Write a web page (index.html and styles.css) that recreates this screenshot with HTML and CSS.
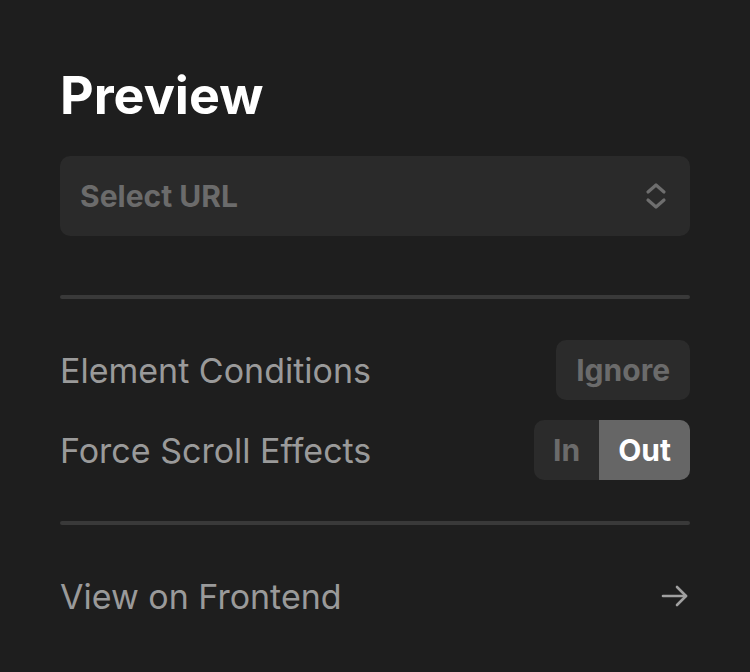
FILE: index.html
```html
<!DOCTYPE html>
<html>
<head>
<meta charset="utf-8">
<link rel="stylesheet" href="styles.css">
</head>
<body>
<div class="panel">
  <h1 class="title">Preview</h1>
  <div class="select">
    <span class="select-text">Select URL</span>
    <svg class="chevrons" width="24" height="30" viewBox="0 0 24 30" fill="none" stroke="#6e6e6e" stroke-width="3.2" stroke-linecap="round" stroke-linejoin="round">
      <path d="M4 11 L12 4 L20 11"/>
      <path d="M4 19 L12 26 L20 19"/>
    </svg>
  </div>
  <div class="divider"></div>
  <div class="rows">
    <div class="row">
      <span class="label">Element Conditions</span>
      <span class="btn">Ignore</span>
    </div>
    <div class="row">
      <span class="label">Force Scroll Effects</span>
      <div class="toggle">
        <span class="seg">In</span>
        <span class="seg active">Out</span>
      </div>
    </div>
  </div>
  <div class="divider"></div>
  <div class="link-row">
    <span class="label">View on Frontend</span>
    <svg class="arrow" width="30" height="24" viewBox="0 0 30 24" fill="none" stroke="#a0a0a0" stroke-width="2.6" stroke-linecap="round" stroke-linejoin="round">
      <path d="M3 12 H26"/>
      <path d="M17 3 L26 12 L17 21"/>
    </svg>
  </div>
</div>
</body>
</html>
```
FILE: styles.css
```css
html, body {
  margin: 0;
  padding: 0;
  background: #1e1e1e;
}
body {
  font-family: Inter, "Noto Sans", sans-serif;
  width: 750px;
  height: 672px;
  overflow: hidden;
}
.panel {
  padding: 60px 60px 0 60px;
  display: flex;
  flex-direction: column;
}
.title {
  margin: 0;
  font-size: 52px;
  font-weight: 700;
  color: #ffffff;
  line-height: 72px;
}
.select {
  margin-top: 24px;
  height: 80px;
  border-radius: 10px;
  background: #2a2a2a;
  display: flex;
  align-items: center;
  justify-content: space-between;
  padding: 0 22px 0 20px;
}
.select-text {
  font-size: 30px;
  font-weight: 700;
  color: #6b6b6b;
}
.chevrons {
  display: block;
}
.divider {
  height: 4px;
  border-radius: 2px;
  background: #393939;
}
.select + .divider {
  margin-top: 59px;
}
.rows {
  display: flex;
  flex-direction: column;
  gap: 20px;
  margin-top: 41px;
  margin-bottom: 41px;
}
.row {
  display: flex;
  align-items: center;
  justify-content: space-between;
  height: 60px;
}
.label {
  font-size: 34px;
  color: #9a9a9a;
  font-weight: 400;
}
.btn {
  height: 60px;
  padding: 0 20px;
  display: flex;
  align-items: center;
  border-radius: 10px;
  background: #2b2b2b;
  color: #6b6b6b;
  font-size: 30px;
  font-weight: 700;
}
.toggle {
  display: flex;
  height: 60px;
  border-radius: 10px;
  overflow: hidden;
  background: #2b2b2b;
}
.seg {
  display: flex;
  align-items: center;
  padding: 0 19px;
  font-size: 30px;
  font-weight: 700;
  color: #6b6b6b;
}
.seg.active {
  background: #666666;
  color: #ffffff;
}
.link-row {
  display: flex;
  align-items: center;
  justify-content: space-between;
  margin-top: 46px;
  height: 50px;
}
.arrow {
  display: block;
}
```
